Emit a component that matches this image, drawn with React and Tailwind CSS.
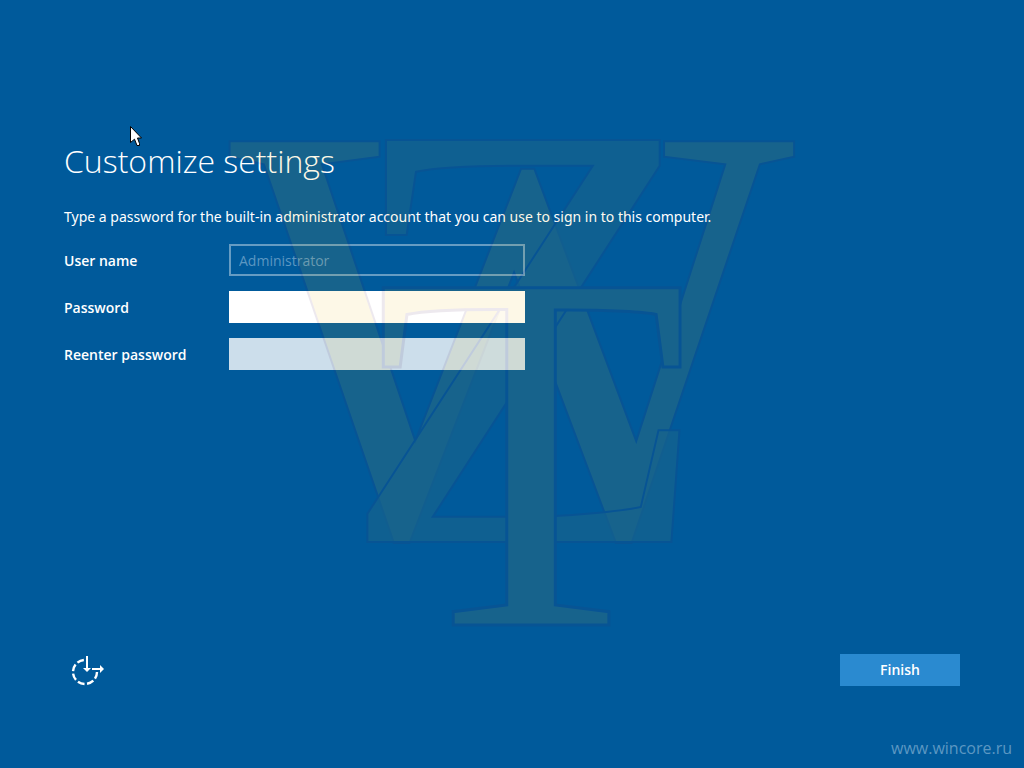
const fields = [
  {
    id: "username",
    label: "User name",
    type: "text",
    value: "Administrator",
    disabled: true,
    style: "border-2 border-[#669cc3] bg-transparent text-[#5c97c2]",
  },
  { id: "password", label: "Password", type: "password", style: "bg-white text-black" },
  { id: "reenter", label: "Reenter password", type: "password", style: "bg-[#ccdeeb] text-black" },
];

export default function App() {
  return (
    <div className="relative flex min-h-screen flex-col overflow-hidden bg-[#005a9b] font-['Open_Sans','Noto_Sans',sans-serif] text-white">
      <main className="flex-1 px-16 pt-[136px]">
        <h1 className="text-[32px] leading-[50px] font-light">Customize settings</h1>
        <p className="mt-5 font-['Noto_Sans',sans-serif] text-sm leading-[22px]">
          Type a password for the built-in administrator account that you can use to sign in to this computer.
        </p>

        <form className="mt-4 flex flex-col gap-[15px]">
          {fields.map((f) => (
            <div key={f.id} className="flex items-center">
              <label htmlFor={f.id} className="w-[165px] pt-0.5 text-sm font-semibold">
                {f.label}
              </label>
              <input
                id={f.id}
                type={f.type}
                defaultValue={f.value}
                disabled={f.disabled}
                className={`h-8 w-[296px] px-2 text-sm outline-none ${f.style}`}
              />
            </div>
          ))}
        </form>
      </main>

      <footer className="flex items-center justify-between px-16">
        <button type="button" aria-label="Ease of access" className="flex size-12 items-center justify-center">
          <EaseIcon />
        </button>
        <button type="button" className="h-8 w-[120px] bg-[#2a8ad0] text-sm font-semibold">
          Finish
        </button>
      </footer>

      <div className="flex justify-end px-3 pt-[42px] pb-2">
        <a href="#" className="text-base leading-6 text-[#5c97c2]">
          www.wincore.ru
        </a>
      </div>

      <Monogram />
      <Cursor />
    </div>
  );
}

// clock with dashed rim and two arrow hands
function EaseIcon() {
  return (
    <svg width="36" height="32" viewBox="0 0 36 32" fill="none" stroke="currentColor" strokeWidth="2.4">
      <path d="M27 18A12 12 0 1 1 14 6" strokeDasharray="7 2.6" />
      <path d="M17 2V15M22 15H31" strokeWidth="2" />
      <path d="M13 14H21L17 18ZM30 11V19L34 15Z" fill="currentColor" stroke="none" />
    </svg>
  );
}

// faint logo laid over the whole screen
function Monogram() {
  return (
    <div className="pointer-events-none absolute inset-0 flex items-center justify-center" aria-hidden="true">
      <svg
        width="580"
        height="520"
        viewBox="0 0 580 520"
        className="opacity-[0.095] font-['Liberation_Serif',serif]"
        stroke="#501e5a"
        strokeWidth="2"
      >
        <text x="7" y="410" fontSize="600" fill="#f0be0a">W</text>
        <text x="116" y="418" fontSize="614" fill="#f0be0a" fillOpacity="0.65">Z</text>
        <text x="152" y="501" fontSize="515" fill="#f0be0a" strokeWidth="3">T</text>
      </svg>
    </div>
  );
}

function Cursor() {
  return (
    <svg className="pointer-events-none absolute top-[126px] left-[130px]" width="12" height="21" viewBox="0 0 12 21">
      <path d="M.5 .5V16.5L4.5 13.2L7 19.5H9.5V17.5L7.5 12H11.5Z" fill="white" stroke="black" />
    </svg>
  );
}
